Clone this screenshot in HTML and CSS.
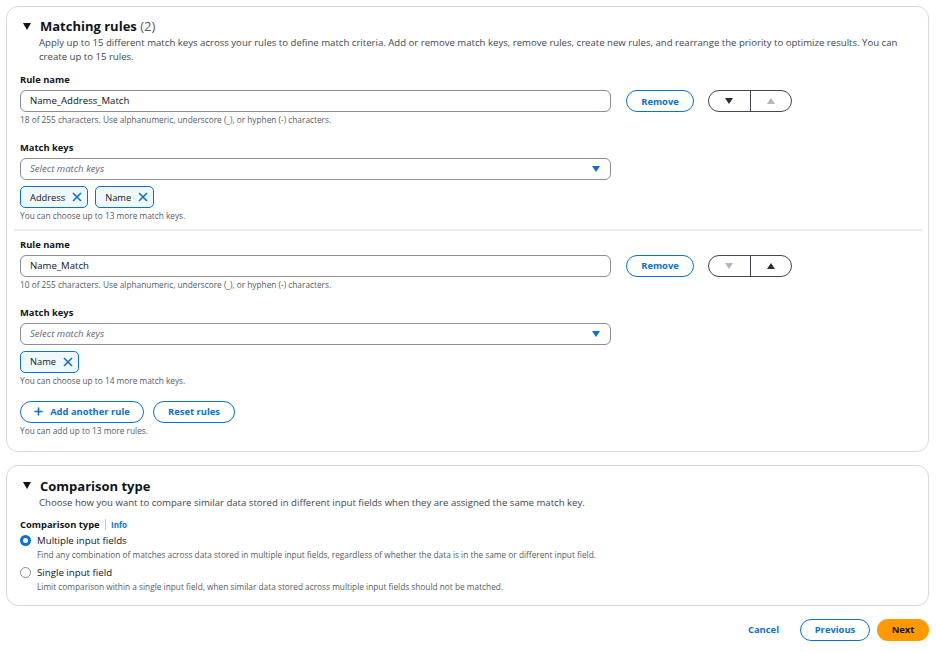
FILE: index.html
```html
<!DOCTYPE html>
<html lang="en">
<head>
    <meta charset="UTF-8">
    <meta name="viewport" content="width=device-width, initial-scale=1.0">
    <title>Matching rules</title>
    <link rel="stylesheet" href="styles.css">
</head>
<body>
    <div id="wrap">
        <!-- matching rules -->
        <div class="card rules-card">
            <div class="card-head">
                <i class="caret"></i>
                <h2>Matching rules <span class="count">(2)</span></h2>
            </div>
            <p class="card-desc">Apply up to 15 different match keys across your rules to define match criteria. Add or remove match keys, remove rules, create new rules, and rearrange the priority to optimize results. You can create up to 15 rules.</p>

            <div class="rule">
                <div class="label">Rule name</div>
                <div class="row">
                    <div class="input">Name_Address_Match</div>
                    <button class="btn btn-normal remove">Remove</button>
                    <div class="order">
                        <span class="seg"><i class="tri down"></i></span>
                        <span class="seg off"><i class="tri up"></i></span>
                    </div>
                </div>
                <div class="hint">18 of 255 characters. Use alphanumeric, underscore (_), or hyphen (-) characters.</div>

                <div class="label keys-label">Match keys</div>
                <div class="select">Select match keys <i class="tri down blue"></i></div>
                <div class="tokens">
                    <span class="token">Address <svg class="x" viewBox="0 0 10 10"><path d="M1 1L9 9M9 1L1 9"/></svg></span>
                    <span class="token">Name <svg class="x" viewBox="0 0 10 10"><path d="M1 1L9 9M9 1L1 9"/></svg></span>
                </div>
                <div class="hint">You can choose up to 13 more match keys.</div>
            </div>

            <div class="divider"></div>

            <div class="rule">
                <div class="label">Rule name</div>
                <div class="row">
                    <div class="input">Name_Match</div>
                    <button class="btn btn-normal remove">Remove</button>
                    <div class="order">
                        <span class="seg off"><i class="tri down"></i></span>
                        <span class="seg"><i class="tri up"></i></span>
                    </div>
                </div>
                <div class="hint">10 of 255 characters. Use alphanumeric, underscore (_), or hyphen (-) characters.</div>

                <div class="label keys-label">Match keys</div>
                <div class="select">Select match keys <i class="tri down blue"></i></div>
                <div class="tokens">
                    <span class="token">Name <svg class="x" viewBox="0 0 10 10"><path d="M1 1L9 9M9 1L1 9"/></svg></span>
                </div>
                <div class="hint">You can choose up to 14 more match keys.</div>
            </div>

            <div class="actions">
                <button class="btn btn-normal add"><svg class="plus" viewBox="0 0 10 10"><path d="M5 0.5V9.5M0.5 5H9.5"/></svg>Add another rule</button>
                <button class="btn btn-normal reset">Reset rules</button>
            </div>
            <div class="hint">You can add up to 13 more rules.</div>
        </div>

        <!-- comparison type -->
        <div class="card compare-card">
            <div class="card-head">
                <i class="caret"></i>
                <h2>Comparison type</h2>
            </div>
            <p class="card-desc">Choose how you want to compare similar data stored in different input fields when they are assigned the same match key.</p>

            <div class="label">Comparison type <span class="info">Info</span></div>
            <div class="radio">
                <span class="dot on"></span>
                <div>
                    <div class="radio-label">Multiple input fields</div>
                    <div class="hint">Find any combination of matches across data stored in multiple input fields, regardless of whether the data is in the same or different input field.</div>
                </div>
            </div>
            <div class="radio">
                <span class="dot"></span>
                <div>
                    <div class="radio-label">Single input field</div>
                    <div class="hint">Limit comparison within a single input field, when similar data stored across multiple input fields should not be matched.</div>
                </div>
            </div>
        </div>

        <div class="footer">
            <button class="btn btn-link">Cancel</button>
            <button class="btn btn-normal prev">Previous</button>
            <button class="btn btn-primary">Next</button>
        </div>
    </div>
</body>
</html>
```

FILE: styles.css
```css
* {
    margin: 0;
    padding: 0;
    box-sizing: border-box;
}

body {
    width: 100%;
    height: 100vh;
    background: #fff;
    color: #0f141a;
    font-family: "Open Sans", "Noto Sans", sans-serif;
    font-size: 9.5px;
}

#wrap {
    padding: 6px 7px 0 6px;
}

.card {
    border: 1px solid #d5d8dd;
    border-radius: 12px;
    padding: 9px 13px 14px;
    background: #fff;
}

.card-head {
    display: flex;
    align-items: center;
    height: 20px;
    padding-left: 3px;
}

.caret {
    display: inline-block;
    width: 0;
    height: 0;
    border-left: 4.5px solid transparent;
    border-right: 4.5px solid transparent;
    border-top: 7px solid #0f141a;
    margin-right: 9px;
}

.card-head h2 {
    font-size: 13px;
    font-weight: 700;
    line-height: 20px;
}

.count {
    font-weight: 400;
    color: #545b64;
}

.card-desc {
    padding-left: 19px;
    font-size: 9.6px;
    line-height: 14px;
    color: #414750;
}

.label {
    font-weight: 700;
    font-size: 9.4px;
    line-height: 13px;
    margin-top: 9px;
    margin-bottom: 4px;
}

.keys-label {
    margin-top: 15px;
}

.row {
    display: flex;
    align-items: center;
}

.input,
.select {
    width: 591px;
    height: 22px;
    border: 1px solid #8c8c94;
    border-radius: 6px;
    padding-left: 9px;
    line-height: 20px;
    font-size: 9.6px;
}

.select {
    position: relative;
    font-style: italic;
    color: #656871;
}

.btn {
    font-family: inherit;
    font-size: 9.4px;
    font-weight: 700;
    border-radius: 12px;
    height: 22px;
    padding: 0 12px;
    background: #fff;
    cursor: pointer;
    display: inline-flex;
    align-items: center;
    justify-content: center;
}

.btn-normal {
    border: 1.5px solid #0972d3;
    color: #0972d3;
}

.remove {
    margin-left: 15px;
    width: 68px;
}

.order {
    display: flex;
    margin-left: 14px;
    width: 84px;
    height: 22px;
    border: 1.5px solid #424650;
    border-radius: 12px;
    overflow: hidden;
}

.seg {
    flex: 1;
    display: flex;
    align-items: center;
    justify-content: center;
}

.seg:first-child {
    border-right: 1.5px solid #424650;
}

.tri {
    display: inline-block;
    width: 0;
    height: 0;
    border-left: 4.5px solid transparent;
    border-right: 4.5px solid transparent;
}

.tri.down {
    border-top: 6px solid #2a2e33;
}

.tri.up {
    border-bottom: 6px solid #2a2e33;
}

.seg.off .tri.down {
    border-top-color: #b4b4bb;
}

.seg.off .tri.up {
    border-bottom-color: #b4b4bb;
}

.select .tri.blue {
    position: absolute;
    right: 10px;
    top: 7px;
    border-top-color: #0972d3;
}

.hint {
    font-size: 8.3px;
    line-height: 12px;
    color: #545b64;
    margin-top: 2px;
}

.tokens {
    display: flex;
    gap: 7px;
    margin-top: 6px;
}

.token {
    display: inline-flex;
    align-items: center;
    height: 22px;
    border: 1.5px solid #0972d3;
    border-radius: 5px;
    background: #f0f8ff;
    padding: 0 5px 0 9px;
    font-size: 9.3px;
}

.token .x {
    width: 10px;
    height: 10px;
    margin-left: 7px;
    stroke: #0972d3;
    stroke-width: 1.6;
    fill: none;
}

.divider {
    height: 1.5px;
    background: #ebebf0;
    margin: 7px -7px 0 -6px;
}

.rule + .divider + .rule .label:first-child {
    margin-top: 7px;
}

.actions {
    display: flex;
    gap: 9px;
    margin-top: 14px;
}

.add {
    width: 124px;
}

.reset {
    width: 82px;
}

.plus {
    width: 9px;
    height: 9px;
    margin-right: 7px;
    stroke: #0972d3;
    stroke-width: 1.8;
    fill: none;
}

.compare-card {
    margin-top: 13px;
    padding-top: 10px;
    padding-bottom: 12px;
}

.compare-card .label {
    margin-top: 8px;
    margin-bottom: 3px;
}

.info {
    color: #0972d3;
    font-size: 8px;
    border-left: 1px solid #c6c6cd;
    padding-left: 5px;
    margin-left: 3px;
}

.radio {
    display: flex;
    gap: 6px;
    margin-bottom: 5px;
}

.radio:last-child {
    margin-bottom: 0;
}

.radio .hint {
    margin-top: 0;
}

.dot {
    width: 11px;
    height: 11px;
    border-radius: 50%;
    border: 1.5px solid #8c8c94;
    margin-top: 1.5px;
    flex: none;
}

.dot.on {
    border: 3.5px solid #0972d3;
}

.radio-label {
    line-height: 14px;
    font-size: 9.7px;
}

.radio .hint {
    line-height: 13px;
}

.footer {
    display: flex;
    justify-content: flex-end;
    align-items: center;
    gap: 7px;
    margin-top: 13px;
}

.btn-link {
    border: none;
    color: #0972d3;
    padding: 0 14px 0 20px;
}

.prev {
    width: 70px;
}

.btn-primary {
    border: none;
    background: #ff9900;
    color: #0f141a;
    width: 52px;
}
```
